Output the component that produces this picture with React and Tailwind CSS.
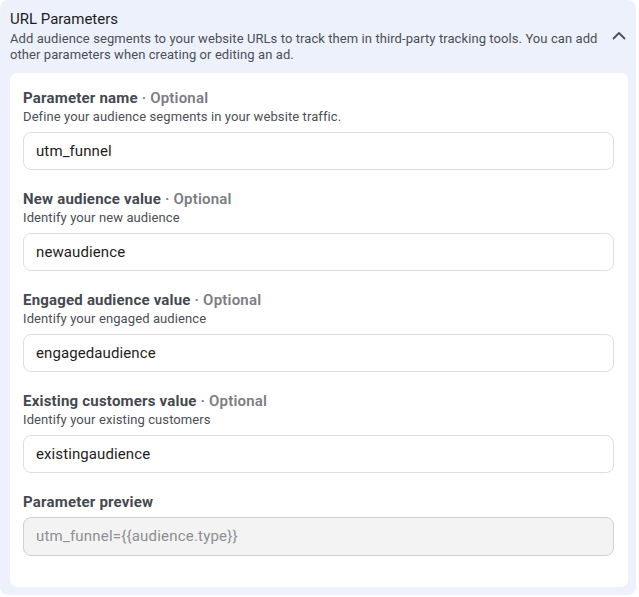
import React from "react";

const fields = [
  { label: "Parameter name", desc: "Define your audience segments in your website traffic.", value: "utm_funnel" },
  { label: "New audience value", desc: "Identify your new audience", value: "newaudience" },
  { label: "Engaged audience value", desc: "Identify your engaged audience", value: "engagedaudience" },
  { label: "Existing customers value", desc: "Identify your existing customers", value: "existingaudience" },
];

export default function App() {
  return (
    <div className="w-[639px] h-[597px] bg-white" style={{ fontFamily: "Roboto, 'Liberation Sans', sans-serif" }}>
      <div className="w-[636px] h-[595px] bg-[#edf1fc] rounded-[8px] pt-[9px] pl-[10px] pr-[8px] flex flex-col">
        <div className="flex items-start">
          <div className="w-[602px]">
            <div className="text-[15px] leading-[20px] text-[#1c1e21]">URL Parameters</div>
            <div className="mt-[2px] text-[13px] leading-[16px] tracking-[0.08px] text-[#4b4f56]">
              Add audience segments to your website URLs to track them in third-party tracking tools. You can add other parameters when creating or editing an ad.
            </div>
          </div>
          <div className="flex-1 flex justify-center pt-[22px] pr-[2px]">
            <svg width="14" height="9" viewBox="0 0 14 9" fill="none">
              <path d="M1.5 7.5 L7 2 L12.5 7.5" stroke="#4b4f56" strokeWidth="1.8" strokeLinecap="round" strokeLinejoin="round" />
            </svg>
          </div>
        </div>
        <div className="mt-[10px] bg-white rounded-[7px] pt-[15px] pl-[13px] pr-[14px] pb-[31px]">
          {fields.map((f) => (
            <div key={f.label} className="mb-[19px]">
              <div className="text-[15px] leading-[20px] tracking-[0.2px]">
                <span className="font-bold text-[#444950]">{f.label}</span>
                <span className="font-semibold text-[#7b7e83]"> · Optional</span>
              </div>
              <div className="mt-[1px] text-[13px] leading-[16px] tracking-[0.1px] text-[#4b4f56]">{f.desc}</div>
              <div className="mt-[7px] h-[38px] border border-[#dcdee2] rounded-[8px] flex items-center pl-[12px] text-[15px] tracking-[0.1px] text-[#1c1e21]">
                {f.value}
              </div>
            </div>
          ))}
          <div className="text-[15px] leading-[20px] tracking-[0.2px] font-bold text-[#444950]">Parameter preview</div>
          <div className="mt-[5px] h-[39px] border border-[#cfd1d4] bg-[#f3f3f3] rounded-[8px] flex items-center pl-[12px] text-[15px] tracking-[0.2px] text-[#8d8f93]">
            {"utm_funnel={{audience.type}}"}
          </div>
        </div>
      </div>
    </div>
  );
}
